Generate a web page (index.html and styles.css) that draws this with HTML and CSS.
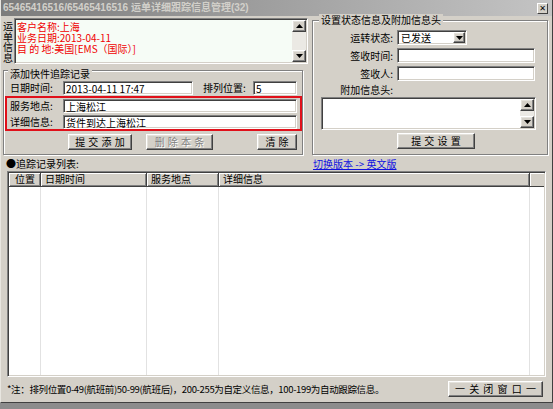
FILE: index.html
```html
<!DOCTYPE html>
<html>
<head>
<meta charset="utf-8">
<link rel="stylesheet" href="styles.css">
</head>
<body>
<div class="window">
  <div class="titlebar">
    <span class="title">65465416516/65465416516 运单详细跟踪信息管理(32)</span>
    <span class="close-btn">✕</span>
  </div>
  <div class="content">
    <div class="top">
      <div class="left-col">
        <div class="info">
          <div class="vlabel">运单信息</div>
          <div class="memo sunken">
            <div class="memo-text">
              <div class="mline">客户名称:上海</div>
              <div class="mline">业务日期:2013-04-11</div>
              <div class="mline">目 的 地:美国[EMS（国际）]</div>
            </div>
            <div class="vscroll">
              <div class="sb-btn raised"><svg width="7" height="4" viewBox="0 0 7 4"><path d="M3.5 0L7 4H0z" fill="#000"/></svg></div>
              <div class="sb-track"></div>
              <div class="sb-btn raised"><svg width="7" height="4" viewBox="0 0 7 4"><path d="M0 0h7L3.5 4z" fill="#000"/></svg></div>
            </div>
          </div>
        </div>
        <div class="group add-group">
          <div class="group-title">添加快件追踪记录</div>
          <div class="row row1">
            <span class="lbl">日期时间:</span>
            <div class="input sunken w-date">2013-04-11 17:47</div>
            <span class="lbl lbl-pos">排列位置:</span>
            <div class="input sunken w-pos">5</div>
          </div>
          <div class="redbox">
            <div class="row"><span class="lbl">服务地点:</span><div class="input sunken w-wide">上海松江</div></div>
            <div class="row"><span class="lbl">详细信息:</span><div class="input sunken w-wide">货件到达上海松江</div></div>
          </div>
          <div class="btn-row">
            <div class="btn raised b-add">提 交 添 加</div>
            <div class="btn raised b-del disabled">删 除 本 条</div>
            <div class="btn raised b-clear">清 除</div>
          </div>
        </div>
      </div>
      <div class="group status-group">
        <div class="group-title">设置状态信息及附加信息头</div>
        <div class="form-grid">
          <span class="lbl-r">运转状态:</span>
          <div class="select sunken">
            <span class="sel-text">已发送</span>
            <span class="sel-btn raised"><svg width="7" height="4" viewBox="0 0 7 4"><path d="M0 0h7L3.5 4z" fill="#000"/></svg></span>
          </div>
          <span class="lbl-r">签收时间:</span>
          <div class="input sunken w-field"></div>
          <span class="lbl-r">签收人:</span>
          <div class="input sunken w-field"></div>
          <span class="lbl-r">附加信息头:</span>
          <span></span>
        </div>
        <div class="memo2 sunken">
          <div class="memo2-area"></div>
          <div class="vscroll">
            <div class="sb-btn raised"><svg width="7" height="4" viewBox="0 0 7 4"><path d="M3.5 0L7 4H0z" fill="#000"/></svg></div>
            <div class="sb-track"></div>
            <div class="sb-btn raised"><svg width="7" height="4" viewBox="0 0 7 4"><path d="M0 0h7L3.5 4z" fill="#000"/></svg></div>
          </div>
        </div>
        <div class="btn raised b-set">提 交 设 置</div>
      </div>
    </div>
    <div class="listbar">
      <span class="list-label">●追踪记录列表:</span>
      <a class="link" href="#">切换版本 -&gt; 英文版</a>
    </div>
    <div class="list sunken">
      <div class="list-head">
        <div class="hcell c1">位置</div>
        <div class="hcell c2">日期时间</div>
        <div class="hcell c3">服务地点</div>
        <div class="hcell c4">详细信息</div>
        <div class="hcell c5"></div>
      </div>
      <div class="list-body">
        <div class="bcol c1"></div>
        <div class="bcol c2"></div>
        <div class="bcol c3"></div>
        <div class="bcol c4"></div>
        <div class="bcol c5"></div>
      </div>
    </div>
    <div class="footer">
      <span class="note">*注：排列位置0-49(航班前)50-99(航班后)，200-255为自定义信息，100-199为自动跟踪信息。</span>
      <div class="btn raised b-close">一 关 闭 窗 口 一</div>
    </div>
  </div>
</div>
</body>
</html>
```

FILE: styles.css
```css
* { box-sizing: border-box; }
html, body { margin: 0; padding: 0; }
body {
  width: 553px;
  height: 409px;
  overflow: hidden;
  background: #8c8c8c;
  font-family: "Noto Sans CJK SC", sans-serif;
  font-size: 10px;
  line-height: 12px;
  color: #000;
}
.window {
  width: 553px;
  height: 403px;
  background: #d4d0c8;
  border-left: 1px solid #e8e6e0;
  border-right: 1px solid #404040;
  border-bottom: 1px solid #404040;
  display: flex;
  flex-direction: column;
}
.titlebar {
  height: 16px;
  flex: none;
  display: flex;
  align-items: center;
  padding: 0 4px 0 2px;
  background: linear-gradient(to right, #7c7c7c, #c4c4c4);
}
.title {
  color: #d2d0ca;
  font-family: "Liberation Sans", "Noto Sans CJK SC", sans-serif;
  font-weight: bold;
  font-size: 10px;
  white-space: nowrap;
}
.close-btn {
  margin-left: auto;
  width: 11px;
  height: 11px;
  background: #d4d0c8;
  border: 1px solid;
  border-color: #fff #404040 #404040 #fff;
  font-size: 8px;
  line-height: 9px;
  text-align: center;
  font-weight: bold;
  font-family: "DejaVu Sans", sans-serif;
}
.content {
  flex: 1;
  display: flex;
  flex-direction: column;
  padding: 1px 3px 0 1px;
}
.sunken {
  border: 1px solid;
  border-color: #808080 #fff #fff #808080;
  box-shadow: inset 1px 1px #404040, inset -1px -1px #d4d0c8;
}
.raised {
  background: #d4d0c8;
  border: 1px solid;
  border-color: #fff #404040 #404040 #fff;
  box-shadow: inset -1px -1px #808080, inset 1px 1px #e4e2dc;
}
.top {
  display: flex;
  align-items: flex-start;
}
.left-col {
  width: 306px;
  flex: none;
  display: flex;
  flex-direction: column;
}
.info {
  display: flex;
  height: 46px;
  margin-top: 1px;
}
.vlabel {
  width: 12px;
  flex: none;
  padding-top: 3px;
  line-height: 10.5px;
  text-align: center;
}
.memo {
  flex: 1;
  display: flex;
  background: #f6fcf6;
  padding: 1px;
}
.memo-text {
  flex: 1;
  padding: 1px 0 0 1px;
  color: #f00000;
  line-height: 11px;
}
.mline {
  white-space: pre;
  height: 11px;
}
.vscroll {
  width: 14px;
  flex: none;
  display: flex;
  flex-direction: column;
}
.sb-btn {
  height: 12px;
  flex: none;
  display: flex;
  align-items: center;
  justify-content: center;
}
.sb-track {
  flex: 1;
  background: #ebe9e4;
}
.group {
  border: 1px solid #808080;
  box-shadow: inset 1px 1px #fff, 1px 1px #fff;
}
.group-title {
  width: fit-content;
  background: #d4d0c8;
  padding: 0 2px;
  line-height: 12px;
  white-space: nowrap;
}
.add-group {
  width: 300px;
  height: 85px;
  margin: 6px 0 0 1px;
  display: flex;
  flex-direction: column;
}
.add-group .group-title {
  margin: -3px 0 0 4px;
}
.row {
  display: flex;
  align-items: center;
  height: 14px;
}
.row1 {
  margin-top: 1px;
  padding-left: 6px;
}
.lbl {
  width: 53px;
  flex: none;
  white-space: nowrap;
}
.lbl-pos {
  width: 50px;
  margin-left: 10px;
}
.input {
  height: 14px;
  background: #fff;
  padding: 1px 2px 0;
  line-height: 11px;
  white-space: nowrap;
  overflow: hidden;
}
.w-date { width: 130px; }
.w-pos { width: 44px; }
.w-wide { width: 234px; }
.redbox {
  margin: 1px 0 0 1px;
  width: 297px;
  border: 2px solid #e0101a;
  padding: 1px 0 0 3px;
  display: flex;
  flex-direction: column;
  gap: 2px;
}
.btn-row {
  display: flex;
  margin-top: 3px;
  padding-left: 64px;
  padding-right: 5px;
}
.btn {
  height: 16px;
  display: flex;
  align-items: center;
  justify-content: center;
  white-space: pre;
  word-spacing: 1px;
}
.b-add { width: 64px; }
.b-del { width: 67px; margin-left: 14px; }
.b-clear { width: 40px; margin-left: auto; }
.disabled {
  color: #808080;
  text-shadow: 1px 1px #fff;
}
.status-group {
  width: 236px;
  height: 135px;
  margin: 3px 0 0 4px;
  display: flex;
  flex-direction: column;
}
.status-group .group-title {
  margin: -7px 0 0 6px;
}
.form-grid {
  display: grid;
  grid-template-columns: 80px 138px;
  column-gap: 4px;
  row-gap: 3px;
  margin-top: 4px;
  align-items: center;
}
.lbl-r {
  text-align: right;
  white-space: nowrap;
}
.form-grid .input.w-field {
  width: 138px;
  height: 15px;
}
.select {
  width: 70px;
  height: 15px;
  background: #fff;
  display: flex;
  align-items: stretch;
  padding: 1px;
}
.sel-text {
  flex: 1;
  padding-left: 2px;
  line-height: 12px;
}
.sel-btn {
  width: 12px;
  display: flex;
  align-items: center;
  justify-content: center;
}
.memo2 {
  margin: 1px 0 0 8px;
  width: 215px;
  height: 33px;
  background: #fff;
  display: flex;
  padding: 1px;
}
.memo2-area { flex: 1; }
.memo2 .sb-btn { height: 12px; }
.b-set {
  width: 78px;
  margin: 3px 0 0 84px;
}
.listbar {
  display: flex;
  margin-top: 3px;
  height: 12px;
  padding-left: 4px;
}
.list-label {
  width: 307px;
  flex: none;
  white-space: nowrap;
}
.link {
  color: #1010e0;
  text-decoration: underline;
  white-space: nowrap;
}
.list {
  margin: 1px 0 0 5px;
  width: 539px;
  height: 206px;
  background: #fff;
  display: flex;
  flex-direction: column;
  padding: 1px;
}
.list-head {
  display: flex;
  height: 14px;
  flex: none;
}
.hcell {
  background: #d4d0c8;
  border-right: 1px solid #404040;
  border-bottom: 1px solid #404040;
  box-shadow: inset 1px 1px #fff, inset -1px -1px #808080;
  padding-left: 4px;
  line-height: 12px;
  white-space: nowrap;
}
.c1 { width: 32px; }
.c2 { width: 106px; }
.c3 { width: 72px; }
.c4 { width: 311px; }
.c5 { flex: 1; }
.hcell.c1 { padding-left: 6px; }
.hcell.c5 { border-right: none; box-shadow: inset 1px 1px #fff; }
.list-body {
  flex: 1;
  display: flex;
}
.bcol {
  border-right: 1px solid #e2e2e2;
}
.bcol.c5 { border-right: none; }
.footer {
  display: flex;
  align-items: center;
  height: 16px;
  margin-top: 4px;
  padding-left: 5px;
}
.note {
  font-size: 9.5px;
  white-space: nowrap;
  letter-spacing: -0.35px;
}
.b-close {
  width: 95px;
  margin-left: auto;
  margin-right: 6px;
  word-spacing: 2px;
}
```
